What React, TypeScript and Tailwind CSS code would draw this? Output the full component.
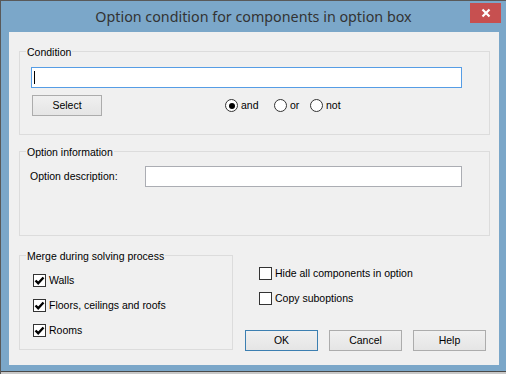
import type { ReactNode } from 'react';

const font = { fontFamily: '"Liberation Sans", Arial, sans-serif' };

function Group({ label, className, children }: { label: string; className: string; children: ReactNode }) {
  return (
    <div className={`border border-[#dcdcdc] ${className}`}>
      <div className="-mt-[7px] ml-[6px] w-fit bg-[#f0f0f0] px-[1px] text-[10.5px] leading-[14px] text-black">{label}</div>
      {children}
    </div>
  );
}

function CheckBox({ checked, label }: { checked?: boolean; label: string }) {
  return (
    <div className="flex items-center h-[13px] gap-[3px]">
      <div className="w-[13px] h-[13px] border border-[#333] bg-white flex items-center justify-center shrink-0">
        {checked && (
          <svg width="11" height="11" viewBox="0 0 11 11">
            <path d="M1.5 5.5 L4.2 8.2 L9.5 2.5" fill="none" stroke="#000" strokeWidth="2.4" />
          </svg>
        )}
      </div>
      <span className="text-[10.5px] leading-[13px] text-black whitespace-nowrap">{label}</span>
    </div>
  );
}

function Radio({ checked, label, w }: { checked?: boolean; label: string; w: string }) {
  return (
    <div className={`flex items-center gap-[3px] ${w}`}>
      <div className="w-[13px] h-[13px] rounded-full border border-[#333] bg-white flex items-center justify-center">
        {checked && <div className="w-[6px] h-[6px] rounded-full bg-black" />}
      </div>
      <span className="text-[10.5px] leading-[13px] text-black">{label}</span>
    </div>
  );
}

function Button({ children, def, w }: { children: string; def?: boolean; w: string }) {
  return (
    <div
      className={`${w} h-[21px] flex items-center justify-center border bg-gradient-to-b from-[#f0f0f0] to-[#e5e5e5] text-[10.5px] text-black ${def ? 'border-[#3c7fb1]' : 'border-[#acacac]'}`}
    >
      {children}
    </div>
  );
}

export default function App() {
  return (
    <div style={font} className="w-[506px] h-[374px] bg-[#7ba7c9] border-t border-l border-[#595959] flex flex-col overflow-hidden">
      <div className="relative h-[31px] shrink-0 flex items-center justify-center">
        <span className="text-[14.3px] text-[#333] pt-[1px]" style={{ fontFamily: '"Noto Sans", "Open Sans", sans-serif' }}>
          Option condition for components in option box
        </span>
        <div className="absolute right-[5px] top-[2px] w-[31px] h-[20px] bg-[#c75050] flex items-center justify-center">
          <svg width="10" height="10" viewBox="0 0 10 10">
            <path d="M1.5 1.5 L8.5 8.5 M8.5 1.5 L1.5 8.5" stroke="#fff" strokeWidth="2.2" />
          </svg>
        </div>
      </div>

      <div className="ml-[8px] w-[490px] h-[333px] shrink-0 bg-[#f0f0f0] pt-[19px]">
        <Group label="Condition" className="ml-[10px] w-[471px] h-[84px]">
          <div className="ml-[11px] mt-[8px] w-[431px] h-[21px] border border-[#569de5] bg-white flex items-center pl-[2px]">
            <div className="w-[1px] h-[13px] bg-black" />
          </div>
          <div className="flex items-center ml-[12px] mt-[7px]">
            <Button w="w-[70px]">Select</Button>
            <div className="flex items-center ml-[123px]">
              <Radio checked label="and" w="w-[49px]" />
              <Radio label="or" w="w-[36px]" />
              <Radio label="not" w="w-[40px]" />
            </div>
          </div>
        </Group>

        <Group label="Option information" className="ml-[10px] mt-[16px] w-[471px] h-[85px]">
          <div className="flex items-center ml-[10px] mt-[7px]">
            <span className="w-[115px] text-[10.5px] text-black">Option description:</span>
            <div className="w-[317px] h-[21px] border border-[#abadb3] bg-white" />
          </div>
        </Group>

        <div className="flex mt-[19px]">
          <Group label="Merge during solving process" className="ml-[10px] w-[214px] h-[95px] shrink-0">
            <div className="flex flex-col gap-[12px] ml-[13px] mt-[11px]">
              <CheckBox checked label="Walls" />
              <CheckBox checked label="Floors, ceilings and roofs" />
              <CheckBox checked label="Rooms" />
            </div>
          </Group>
          <div className="ml-[12px] flex flex-col">
            <div className="ml-[14px] mt-[12px] flex flex-col gap-[12px]">
              <CheckBox label="Hide all components in option" />
              <CheckBox label="Copy suboptions" />
            </div>
            <div className="flex gap-[11px] mt-[25px]">
              <Button def w="w-[73px]">OK</Button>
              <Button w="w-[73px]">Cancel</Button>
              <Button w="w-[73px]">Help</Button>
            </div>
          </div>
        </div>
      </div>

      <div className="h-[6px] shrink-0" />
      <div className="h-[1px] bg-[#4a4a4a] shrink-0" />
      <div className="flex-1 bg-[#c9c9c9]" />
    </div>
  );
}
